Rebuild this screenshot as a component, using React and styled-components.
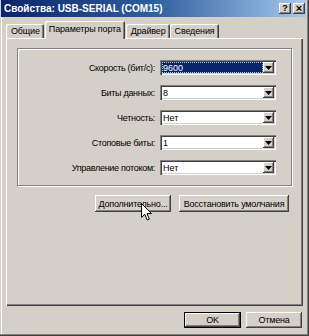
import React from 'react';
import styled, { createGlobalStyle } from 'styled-components';

const GlobalStyle = createGlobalStyle`
  html, body {
    margin: 0;
    padding: 0;
    background: #d4d0c8;
  }
  * {
    box-sizing: border-box;
  }
`;

const Window = styled.div`
  position: relative;
  width: 309px;
  height: 336px;
  padding: 0 3px 3px 1px;
  background: #d4d0c8;
  font-family: "Liberation Sans", Arial, sans-serif;
  font-size: 9px;
  color: #000;
  box-shadow: inset -1px -1px 0 #404040, inset -2px -2px 0 #808080,
    inset 1px 0 0 #d4d0c8, inset 2px 0 0 #ffffff;
  overflow: hidden;
`;

const TitleBar = styled.div`
  height: 17px;
  display: flex;
  align-items: center;
  justify-content: space-between;
  padding: 0 1px 0 3px;
  background: linear-gradient(90deg, #0a246a 0%, #2f5f9e 50%, #a6caf0 100%);
`;

const TitleText = styled.span`
  color: #fff;
  font-weight: bold;
  font-size: 10px;
  white-space: nowrap;
`;

const TitleButtons = styled.div`
  display: flex;
  gap: 2px;
`;

const CaptionButton = styled.div`
  width: 12px;
  height: 11px;
  background: #d4d0c8;
  box-shadow: inset -1px -1px 0 #404040, inset 1px 1px 0 #ffffff,
    inset -2px -2px 0 #808080;
  display: flex;
  align-items: center;
  justify-content: center;
  font-weight: bold;
  font-size: ${p => (p.$big ? '11px' : '9px')};
  line-height: 1;
  color: #000;
`;

const Body = styled.div`
  padding: 0 3px 0 5px;
`;

const TabRow = styled.div`
  display: flex;
  align-items: flex-end;
  height: 21px;
  padding-top: 4px;
  position: relative;
  z-index: 1;
`;

const Tab = styled.div`
  height: ${p => (p.$active ? '18px' : '14px')};
  margin-bottom: ${p => (p.$active ? '-1px' : '0')};
  padding: ${p => (p.$active ? '3px 4px 0 4px' : '2px 4px 0 5px')};
  margin-left: ${p => (p.$active ? '1px' : '0')};
  margin-right: ${p => (p.$active ? '1px' : '0')};
  background: #d4d0c8;
  white-space: nowrap;
  font-size: 9px;
  letter-spacing: -0.15px;
  border-top-left-radius: 2px;
  border-top-right-radius: 2px;
  box-shadow: inset 1px 1px 0 #ffffff, inset -1px 0 0 #404040,
    inset -2px 0 0 #808080;
`;

const Panel = styled.div`
  height: 268px;
  padding: 10px 11px 0 11px;
  background: #d4d0c8;
  box-shadow: inset 1px 1px 0 #ffffff, inset -1px -1px 0 #404040,
    inset -2px -2px 0 #808080;
`;

const GroupBox = styled.div`
  height: 138px;
  padding-top: 11px;
  border: 1px solid #808080;
  box-shadow: 1px 1px 0 #ffffff, inset 1px 1px 0 #ffffff;
`;

const FieldGrid = styled.div`
  display: grid;
  grid-template-columns: 137px 116px;
  column-gap: 5px;
  row-gap: 10px;
  align-items: center;
`;

const Label = styled.label`
  text-align: right;
  font-size: 9px;
  letter-spacing: -0.3px;
  white-space: nowrap;
  color: #000;
`;

const Combo = styled.div`
  height: 15px;
  display: flex;
  background: #fff;
  padding: 2px;
  box-shadow: inset 1px 1px 0 #808080, inset 2px 2px 0 #404040,
    inset -1px -1px 0 #ffffff, inset -2px -2px 0 #d4d0c8;
`;

const ComboValue = styled.div`
  flex: 1;
  display: flex;
  align-items: center;
  padding-left: 1px;
  font-size: 9px;
  background: ${p => (p.$selected ? '#0a246a' : 'transparent')};
  color: ${p => (p.$selected ? '#fff' : '#000')};
  outline: ${p => (p.$selected ? '1px dotted #a6caf0' : 'none')};
  outline-offset: -1px;
`;

const ArrowButton = styled.div`
  width: 11px;
  background: #d4d0c8;
  box-shadow: inset -1px -1px 0 #404040, inset 1px 1px 0 #ffffff,
    inset -2px -2px 0 #808080;
  display: flex;
  align-items: center;
  justify-content: center;
`;

const ButtonRow = styled.div`
  display: flex;
  justify-content: flex-end;
  gap: 8px;
  margin-top: 9px;
  padding-right: 3px;
`;

const Button = styled.button`
  width: ${p => p.$w}px;
  height: ${p => p.$h || 17}px;
  padding: 0;
  background: #d4d0c8;
  border: none;
  font-family: "Liberation Sans", Arial, sans-serif;
  font-size: 9px;
  letter-spacing: -0.2px;
  color: #000;
  white-space: nowrap;
  box-shadow: ${p =>
    p.$default
      ? 'inset 0 0 0 1px #000, inset -2px -2px 0 #404040, inset 2px 2px 0 #ffffff, inset -3px -3px 0 #808080'
      : 'inset -1px -1px 0 #404040, inset 1px 1px 0 #ffffff, inset -2px -2px 0 #808080'};
`;

const Footer = styled.div`
  display: flex;
  justify-content: flex-end;
  gap: 5px;
  margin-top: 6px;
  padding-right: 1px;
`;

const Cursor = styled.svg`
  position: absolute;
  left: 141px;
  top: 203px;
`;

const fields = [
  { label: 'Скорость (бит/с):', value: '9600', selected: true },
  { label: 'Биты данных:', value: '8' },
  { label: 'Четность:', value: 'Нет' },
  { label: 'Стоповые биты:', value: '1' },
  { label: 'Управление потоком:', value: 'Нет' },
];

function DropArrow() {
  return (
    <svg width="7" height="4" viewBox="0 0 7 4">
      <path d="M0 0h7L3.5 4z" fill="#000" />
    </svg>
  );
}

export default function App() {
  return (
    <>
      <GlobalStyle />
      <Window>
        <TitleBar>
          <TitleText>Свойства: USB-SERIAL (COM15)</TitleText>
          <TitleButtons>
            <CaptionButton>?</CaptionButton>
            <CaptionButton $big>×</CaptionButton>
          </TitleButtons>
        </TitleBar>
        <Body>
          <TabRow>
            <Tab>Общие</Tab>
            <Tab $active>Параметры порта</Tab>
            <Tab>Драйвер</Tab>
            <Tab>Сведения</Tab>
          </TabRow>
          <Panel>
            <GroupBox>
              <FieldGrid>
                {fields.map(f => (
                  <React.Fragment key={f.label}>
                    <Label>{f.label}</Label>
                    <Combo>
                      <ComboValue $selected={f.selected}>{f.value}</ComboValue>
                      <ArrowButton>
                        <DropArrow />
                      </ArrowButton>
                    </Combo>
                  </React.Fragment>
                ))}
              </FieldGrid>
            </GroupBox>
            <ButtonRow>
              <Button $w={76}>Дополнительно...</Button>
              <Button $w={110}>Восстановить умолчания</Button>
            </ButtonRow>
          </Panel>
          <Footer>
            <Button $w={57} $h={16} $default>OK</Button>
            <Button $w={56} $h={16}>Отмена</Button>
          </Footer>
        </Body>
        <Cursor width="11" height="18" viewBox="0 0 11 18">
          <path
            d="M0.5 0.5 L0.5 14.5 L3.8 11.3 L6.2 17 L8.3 16.1 L6 10.6 L10.5 10.6 Z"
            fill="#fff"
            stroke="#000"
            strokeWidth="1"
          />
        </Cursor>
      </Window>
    </>
  );
}
